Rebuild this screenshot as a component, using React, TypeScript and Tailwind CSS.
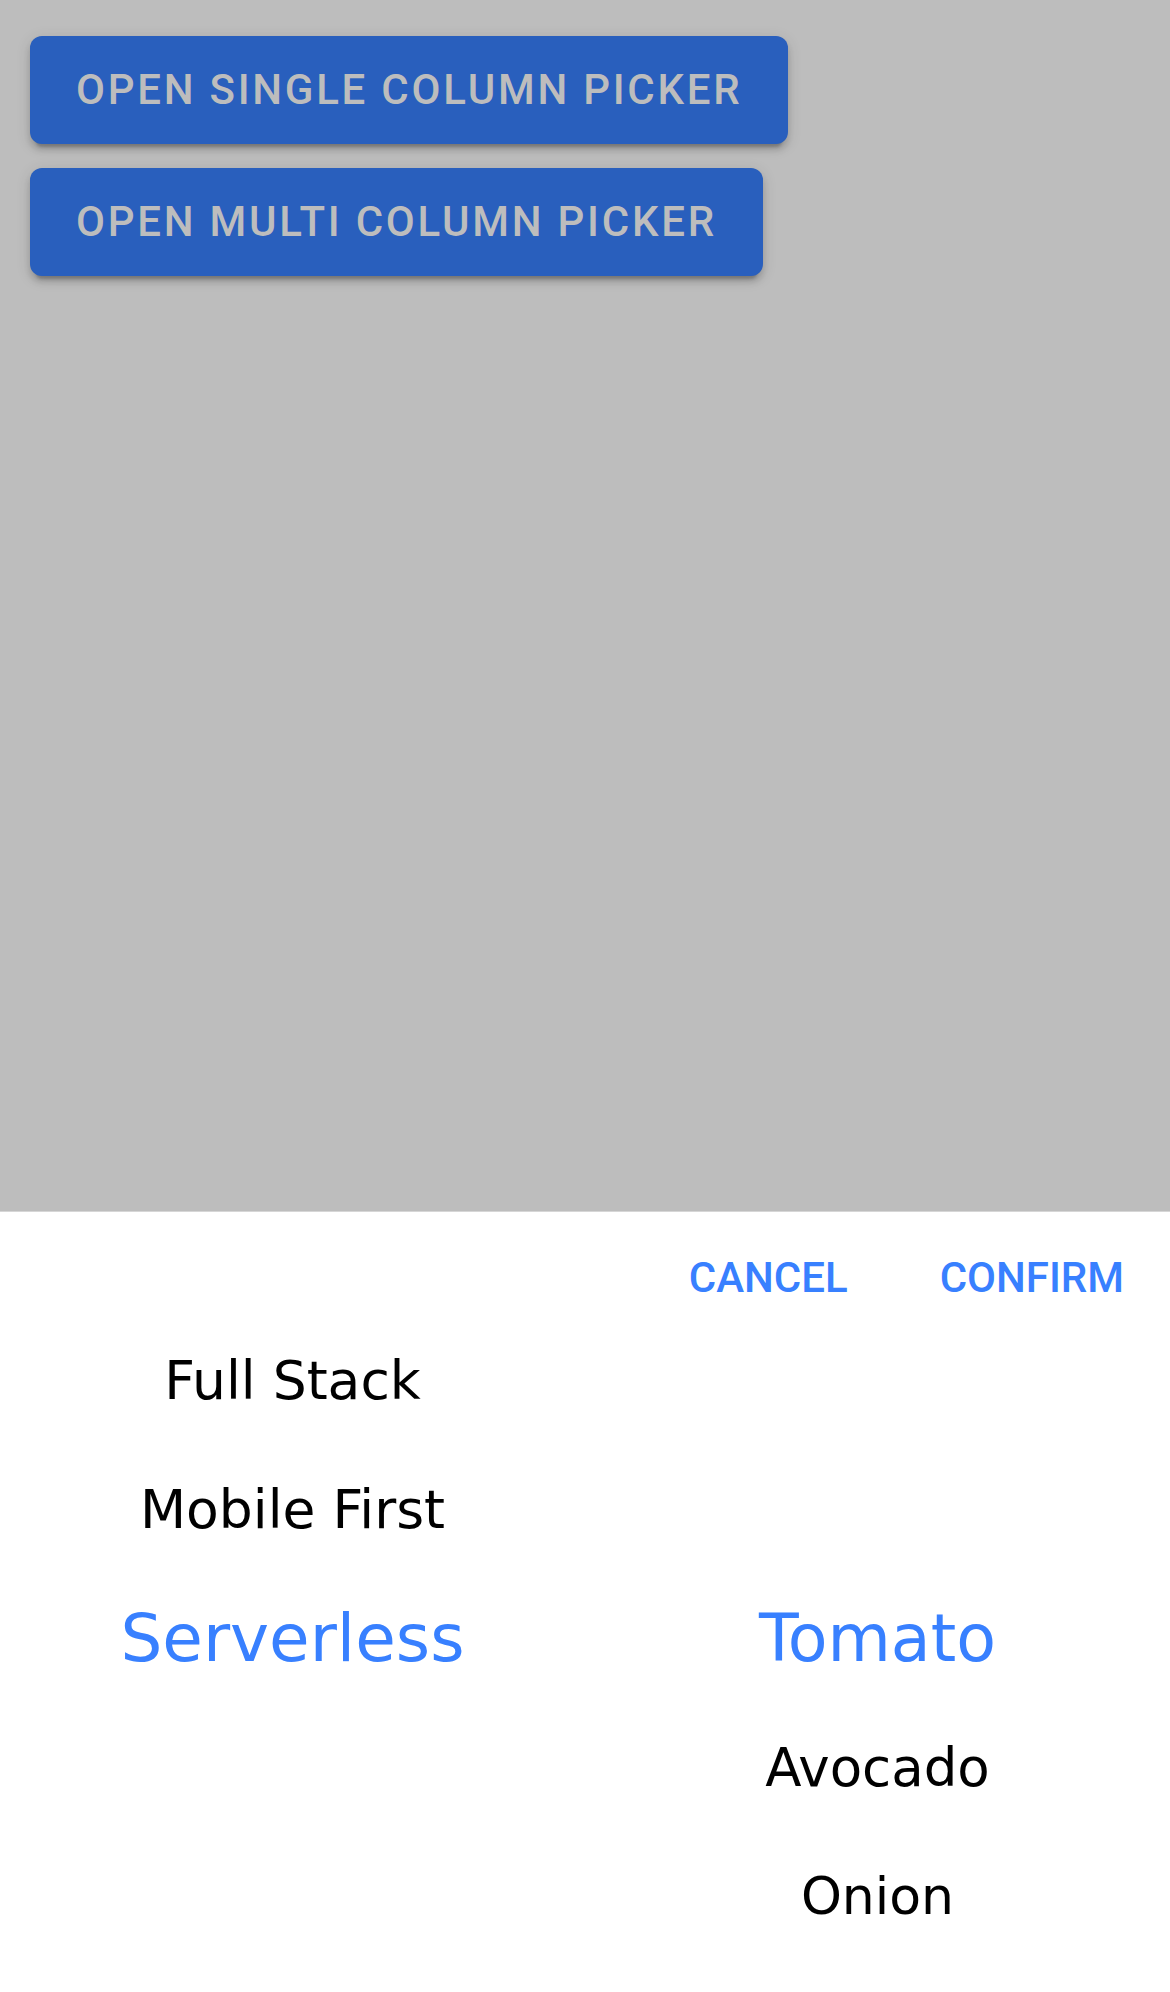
const left = [
  { label: "Full Stack", size: "text-[53.5px] text-black" },
  { label: "Mobile First", size: "text-[53.5px] text-black" },
  { label: "Serverless", size: "text-[66px] text-[#3880ff]" },
];

const right = [
  { label: "", size: "text-[52px] text-black" },
  { label: "", size: "text-[52px] text-black" },
  { label: "Tomato", size: "text-[65px] text-[#3880ff]" },
  { label: "Avocado", size: "text-[53px] text-black" },
  { label: "Onion", size: "text-[52px] text-black" },
];

function OpenButton({ children }: { children: React.ReactNode }) {
  return (
    <button className="h-[108px] rounded-[12px] bg-[#295fbd] px-[46px] font-['Roboto',sans-serif] text-[42px] font-medium uppercase leading-[42px] tracking-[2.75px] text-[#bdbdbd] shadow-[0_9px_3px_-6px_rgba(0,0,0,0.2),0_6px_6px_0_rgba(0,0,0,0.14),0_3px_15px_0_rgba(0,0,0,0.12)]">
      {children}
    </button>
  );
}

function Column({ items }: { items: { label: string; size: string }[] }) {
  return (
    <div className="flex flex-col">
      {items.map((item, i) => (
        <div key={i} className={`h-[129px] text-center leading-[129px] ${item.size}`}>
          {item.label}
        </div>
      ))}
    </div>
  );
}

export default function App() {
  return (
    <div className="flex h-[1992px] w-full flex-col overflow-hidden bg-white">
      <div className="flex h-[1211px] shrink-0 flex-col items-start gap-[24px] bg-[#bdbdbd] px-[30px] pt-[36px]">
        <OpenButton>Open Single Column Picker</OpenButton>
        <OpenButton>Open Multi Column Picker</OpenButton>
      </div>

      <div className="flex-1 overflow-hidden border-t border-[#d6d6d6] bg-white font-['DejaVu_Sans',sans-serif]">
        <div className="flex h-[104px] items-start justify-end pt-[45px]">
          <button className="px-[46px] font-['Roboto',sans-serif] text-[42px] font-medium uppercase leading-[42px] text-[#3880ff]">
            Cancel
          </button>
          <button className="px-[46px] font-['Roboto',sans-serif] text-[42px] font-medium uppercase leading-[42px] text-[#3880ff]">
            Confirm
          </button>
        </div>
        <div className="grid grid-cols-2">
          <Column items={left} />
          <Column items={right} />
        </div>
      </div>
    </div>
  );
}
